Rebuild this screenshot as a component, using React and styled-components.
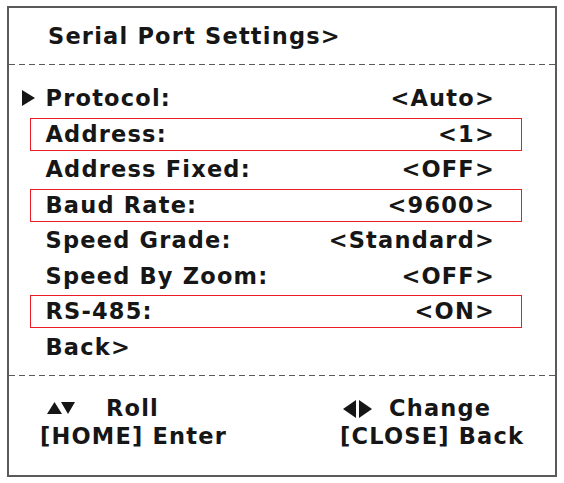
import React from "react";
import styled, { createGlobalStyle } from "styled-components";

const GlobalStyle = createGlobalStyle`
    body {
        margin: 0;
        background: #ffffff;
        font-family: "DejaVu Sans", "Liberation Sans", Arial, sans-serif;
        color: #161616;
    }
`;

const Frame = styled.div`
    display: flex;
    flex-direction: column;
    box-sizing: border-box;
    width: 550px;
    height: 471px;
    margin: 6px 0 0 7px;
    border: 2px solid #5a5a5a;
`;

const Header = styled.div`
    display: flex;
    align-items: center;
    height: 56px;
    padding-left: 39px;
`;

const MenuText = styled.span`
    font-size: 22.5px;
    font-weight: bold;
    letter-spacing: 1.2px;
    white-space: nowrap;
    line-height: 1;
`;

const Divider = styled.div`
    height: 1px;
    background-image: linear-gradient(to right, #5a5a5a 0 6px, transparent 6px 10px);
    background-size: 10px 1px;
    background-repeat: repeat-x;
`;

const MenuList = styled.div`
    display: flex;
    flex-direction: column;
    gap: 2.5px;
    padding: 17px 0 11px 21px;
`;

const Row = styled.div`
    position: relative;
    display: flex;
    justify-content: space-between;
    align-items: center;
    box-sizing: border-box;
    width: 492px;
    height: 33px;
    padding: 0 26px 0 14.5px;
    border: 1.5px solid ${({ highlight }) => (highlight ? "#ec1c24" : "transparent")};
`;

const Cursor = styled.svg`
    position: absolute;
    left: -9px;
    top: 7px;
    width: 13px;
    height: 16px;
`;

const Footer = styled.div`
    display: grid;
    grid-template-columns: 300px 1fr;
    grid-auto-rows: 28px;
    padding: 19px 0 0 31px;
`;

const Hint = styled.div`
    display: flex;
    align-items: center;
    gap: ${({ gap }) => gap || 0}px;
    padding-left: ${({ indent }) => indent || 0}px;
`;

const Arrows = styled.svg`
    display: block;
`;

const items = [
    { label: "Protocol:", value: "<Auto>", cursor: true },
    { label: "Address:", value: "<1>", highlight: true },
    { label: "Address Fixed:", value: "<OFF>" },
    { label: "Baud Rate:", value: "<9600>", highlight: true },
    { label: "Speed Grade:", value: "<Standard>" },
    { label: "Speed By Zoom:", value: "<OFF>" },
    { label: "RS-485:", value: "<ON>", highlight: true },
    { label: "Back>", value: "" },
];

const UpDownIcon = () => (
    <Arrows width="28" height="13" viewBox="0 0 28 13">
        <polygon points="0,12 7.5,0 15,12" fill="#161616" />
        <polygon points="14,0 28,0 21,12" fill="#161616" />
    </Arrows>
);

const LeftRightIcon = () => (
    <Arrows width="29" height="18" viewBox="0 0 29 18">
        <polygon points="13,0 13,18 0,9" fill="#161616" />
        <polygon points="16,0 29,9 16,18" fill="#161616" />
    </Arrows>
);

const App = () => {
    return (
        <>
            <GlobalStyle />
            <Frame>
                <Header>
                    <MenuText>Serial Port Settings&gt;</MenuText>
                </Header>
                <Divider />
                <MenuList>
                    {items.map((item) => (
                        <Row key={item.label} highlight={item.highlight ? 1 : 0}>
                            {item.cursor && (
                                <Cursor viewBox="0 0 13 16">
                                    <polygon points="0,0 13,8 0,16" fill="#161616" />
                                </Cursor>
                            )}
                            <MenuText>{item.label}</MenuText>
                            <MenuText>{item.value}</MenuText>
                        </Row>
                    ))}
                </MenuList>
                <Divider />
                <Footer>
                    <Hint indent={7} gap={31}>
                        <UpDownIcon />
                        <MenuText>Roll</MenuText>
                    </Hint>
                    <Hint indent={3} gap={17}>
                        <LeftRightIcon />
                        <MenuText>Change</MenuText>
                    </Hint>
                    <Hint>
                        <MenuText>[HOME] Enter</MenuText>
                    </Hint>
                    <Hint>
                        <MenuText>[CLOSE] Back</MenuText>
                    </Hint>
                </Footer>
            </Frame>
        </>
    );
};

export default App;
